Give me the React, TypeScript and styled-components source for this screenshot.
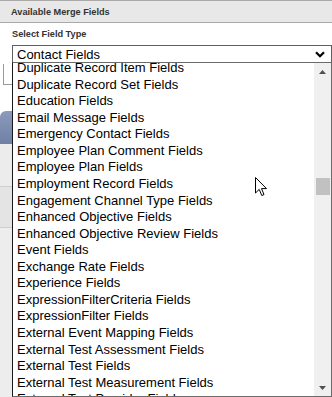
import React from "react";
import styled, { createGlobalStyle } from "styled-components";

const GlobalStyle = createGlobalStyle`
  html, body { margin: 0; padding: 0; background: #fff; }
  body { width: 332px; height: 397px; overflow: hidden; font-family: "Liberation Sans", Arial, sans-serif; }
`;

const Page = styled.div`
  position: relative;
  width: 332px;
  height: 397px;
  overflow: hidden;
  background: #fff;
`;

const Header = styled.div`
  height: 21px;
  border-top: 1px solid #a9a9a9;
  border-bottom: 1px solid #a9a9a9;
  background: #e8e8e8;
  display: flex;
  align-items: center;
  padding-left: 11px;
  font-size: 9.2px;
  font-weight: bold;
  color: #333;
`;

const Content = styled.div`
  padding: 6px 0 0 12px;
  display: flex;
  flex-direction: column;
`;

const Label = styled.div`
  font-size: 9.2px;
  font-weight: bold;
  color: #333;
  height: 16px;
  line-height: 10px;
`;

const SelectBox = styled.div`
  height: 17px;
  border: 1px solid #5f5f5f;
  display: flex;
  align-items: center;
  justify-content: space-between;
  padding: 0 6px 0 4px;
  font-size: 13px;
  color: #000;
`;

const Under = styled.div`
  display: flex;
  flex-direction: column;
`;

const UnderBox = styled.div`
  margin-left: 3px;
  height: 20px;
  border-left: 1px solid #9a9a9a;
  border-bottom: 1px solid #9a9a9a;
`;

const UnderButton = styled.div`
  margin-top: 26px;
  height: 33px;
  border-top-left-radius: 6px;
  background: linear-gradient(#8c9bbb, #6f80a6);
`;

const UnderGray = styled.div<{ $h: number; $bg: string }>`
  height: ${(p) => p.$h}px;
  background: ${(p) => p.$bg};
  border-bottom: 1px solid #cfcfcf;
`;

const Popup = styled.div`
  position: absolute;
  left: 12px;
  top: 62px;
  width: 318px;
  height: 333px;
  border: 1px solid #6b6b6b;
  border-left-color: #1a1a1a;
  background: #fff;
  display: flex;
`;

const List = styled.div`
  flex: 1;
  overflow: hidden;
`;

const ListInner = styled.div`
  margin-top: -2.8px;
`;

const Item = styled.div`
  height: 16.56px;
  line-height: 16.56px;
  padding-left: 4px;
  font-size: 13px;
  color: #000;
  white-space: nowrap;
`;

const Scrollbar = styled.div`
  width: 17px;
  background: #f0f0f0;
  position: relative;
  display: flex;
  flex-direction: column;
  justify-content: space-between;
  align-items: center;
`;

const Arrow = styled.div<{ $down?: boolean }>`
  height: 17px;
  display: flex;
  align-items: center;
  justify-content: center;
`;

const Thumb = styled.div`
  position: absolute;
  left: 2px;
  right: 1px;
  top: 115px;
  height: 17px;
  background: #c1c1c1;
`;

const Cursor = styled.svg`
  position: absolute;
  left: 255px;
  top: 177px;
`;

const items = [
  "Duplicate Record Item Fields",
  "Duplicate Record Set Fields",
  "Education Fields",
  "Email Message Fields",
  "Emergency Contact Fields",
  "Employee Plan Comment Fields",
  "Employee Plan Fields",
  "Employment Record Fields",
  "Engagement Channel Type Fields",
  "Enhanced Objective Fields",
  "Enhanced Objective Review Fields",
  "Event Fields",
  "Exchange Rate Fields",
  "Experience Fields",
  "ExpressionFilterCriteria Fields",
  "ExpressionFilter Fields",
  "External Event Mapping Fields",
  "External Test Assessment Fields",
  "External Test Fields",
  "External Test Measurement Fields",
  "External Test Provider Fields",
];

export default function App() {
  return (
    <Page>
      <GlobalStyle />
      <Header>Available Merge Fields</Header>
      <Content>
        <Label>Select Field Type</Label>
        <SelectBox>
          <span>Contact Fields</span>
          <svg width="10" height="7" viewBox="0 0 10 7">
            <path d="M1 1.2 L5 5.2 L9 1.2" fill="none" stroke="#000" strokeWidth="2.2" />
          </svg>
        </SelectBox>
      </Content>
      <Under>
        <UnderBox />
        <UnderButton />
        <UnderGray $h={42} $bg="#ececec" />
        <UnderGray $h={40} $bg="#e4e4e4" />
        <UnderGray $h={170} $bg="#ededed" />
      </Under>
      <Popup>
        <List>
          <ListInner>
            {items.map((t) => (
              <Item key={t}>{t}</Item>
            ))}
          </ListInner>
        </List>
        <Scrollbar>
          <Arrow>
            <svg width="7" height="4" viewBox="0 0 7 4">
              <path d="M0 4 L3.5 0 L7 4 Z" fill="#505050" />
            </svg>
          </Arrow>
          <Thumb />
          <Arrow $down>
            <svg width="7" height="4" viewBox="0 0 7 4">
              <path d="M0 0 L3.5 4 L7 0 Z" fill="#505050" />
            </svg>
          </Arrow>
        </Scrollbar>
      </Popup>
      <Cursor width="13" height="20" viewBox="0 0 13 20">
        <path
          d="M0.5 0.5 L0.5 16 L4.2 12.4 L6.8 18.5 L9 17.6 L6.5 11.6 L11.5 11.6 Z"
          fill="#fff"
          stroke="#000"
          strokeWidth="1"
          strokeLinejoin="miter"
        />
      </Cursor>
    </Page>
  );
}
